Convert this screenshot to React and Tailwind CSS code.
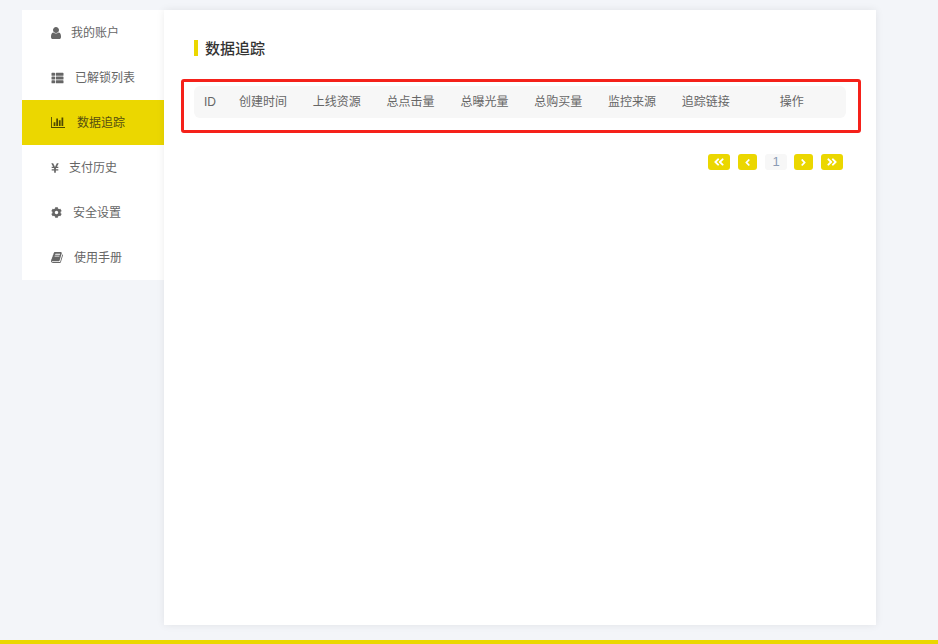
import React from 'react';
import {
  FaThList, FaYenSign, FaCog,
  FaAngleDoubleLeft, FaAngleLeft, FaAngleRight, FaAngleDoubleRight,
} from 'react-icons/fa';

// FontAwesome 4 风格图标
const UserIcon = () => (
  <svg viewBox="256 128 1280 1536" className="w-[10px] h-[12px]" fill="currentColor">
    <path d="M1536 1399q0 109-62.5 187t-150.5 78h-854q-88 0-150.5-78t-62.5-187q0-85 8.5-160.5t31.5-152 58.5-131 94-89 134.5-34.5q131 128 313 128t313-128q76 0 134.5 34.5t94 89 58.5 131 31.5 152 8.5 160.5zm-256-887q0 159-112.5 271.5t-271.5 112.5-271.5-112.5-112.5-271.5 112.5-271.5 271.5-112.5 271.5 112.5 112.5 271.5z" />
  </svg>
);

const ChartIcon = () => (
  <svg viewBox="0 192 2048 1472" className="w-[14px] h-[11px]" fill="currentColor" preserveAspectRatio="none">
    <path d="M640 896v512h-256v-512h256zm384-512v1024h-256v-1024h256zm1024 1152v128h-2048v-1472h128v1344h1920zm-640-896v768h-256v-768h256zm384-384v1152h-256v-1152h256z" />
  </svg>
);

const BookIcon = () => (
  <svg viewBox="0 128 1664 1536" className="w-[12px] h-[11px]" fill="currentColor">
    <path d="M1639 478q40 57 18 129l-275 906q-19 64-76.5 107.5t-122.5 43.5h-923q-77 0-148.5-53.5t-99.5-131.5q-24-67-2-127 0-4 3-27t4-37q1-8-3-21.5t-3-19.5q2-11 8-21t16.5-23.5 16.5-23.5q23-38 45-91.5t30-91.5q3-10 .5-30t-.5-28q3-11 17-28t17-23q21-36 42-92t25-90q1-9-2.5-32t.5-28q4-13 22-30.5t22-22.5q19-26 42.5-84.5t27.5-96.5q1-8-3-25.5t-2-26.5q2-8 9-18t18-23 17-21q8-12 16.5-30.5t15-35 16-36 19.5-32 26.5-23.5 36-11.5 47.5 5.5l-1 3q38-9 51-9h761q74 0 114 56t18 130l-274 906q-36 119-71.5 153.5t-128.5 34.5h-869q-27 0-38 15-11 16-1 43 24 70 144 70h923q29 0 56-15.5t35-41.5l300-987q7-22 5-57 38 15 59 43zm-1064 2q-4 13 2 22.5t20 9.5h608q13 0 25.5-9.5t16.5-22.5l21-64q4-13-2-22.5t-20-9.5h-608q-13 0-25.5 9.5t-16.5 22.5zm-83 256q-4 13 2 22.5t20 9.5h608q13 0 25.5-9.5t16.5-22.5l21-64q4-13-2-22.5t-20-9.5h-608q-13 0-25.5 9.5t-16.5 22.5z" />
  </svg>
);

const menu = [
  { label: '我的账户', icon: <UserIcon />, gap: 'ml-[10px]' },
  { label: '已解锁列表', icon: <FaThList className="w-[13px] h-[12px]" />, gap: 'ml-[11px]' },
  { label: '数据追踪', icon: <ChartIcon />, gap: 'ml-[12px]', active: true },
  { label: '支付历史', icon: <FaYenSign className="w-[8px] h-[12px]" />, gap: 'ml-[10px]' },
  { label: '安全设置', icon: <FaCog className="w-[11px] h-[11px]" />, gap: 'ml-[11px]' },
  { label: '使用手册', icon: <BookIcon />, gap: 'ml-[11px]' },
];

const columns = ['ID', '创建时间', '上线资源', '总点击量', '总曝光量', '总购买量', '监控来源', '追踪链接', '操作'];

const PageButton = ({ wide, children }) => (
  <span className={`${wide ? 'w-[22px]' : 'w-[19px]'} h-4 rounded-[3px] bg-[#ebd700] text-white flex items-center justify-center`}>
    {children}
  </span>
);

const App = () => {
  return (
    <div className="h-screen overflow-hidden flex flex-col bg-[#f3f5f9] font-['Liberation_Sans','Noto_Sans_CJK_SC',sans-serif] text-xs text-[#666]">
      <div className="flex-1 flex items-start pl-[22px] pt-[10px]">
        {/* 左侧菜单 */}
        <ul className="w-[142px] bg-white">
          {menu.map((item) => (
            <li
              key={item.label}
              className={`h-[45px] pl-[29px] flex items-center ${item.active ? 'bg-[#ebd700]' : ''}`}
            >
              <span className={item.active ? 'text-[#4f4a00]' : 'text-[#666]'}>{item.icon}</span>
              <span className={`${item.gap} ${item.active ? 'text-[#554f10]' : ''}`}>{item.label}</span>
            </li>
          ))}
        </ul>

        {/* 内容区 */}
        <main className="relative w-[712px] h-[615px] bg-white px-[30px] pt-[30px] shadow-[0_0_8px_rgba(0,0,0,0.08)]">
          <h2 className="h-4 border-l-4 border-[#ebd700] pl-[7px] pt-px flex items-center text-[15px] leading-4 font-medium text-[#333]">
            数据追踪
          </h2>

          <div className="relative mt-[30px] w-[652px]">
            <div className="h-8 rounded-md bg-[#f7f7f7] grid grid-cols-[35px_repeat(6,73.8px)_98px_1fr] items-center">
              {columns.map((name) => (
                <span key={name} className="pl-[10px] whitespace-nowrap">{name}</span>
              ))}
            </div>
            {/* 红色标注框 */}
            <div className="absolute -left-[13px] -right-[15px] -top-[7px] -bottom-[15px] border-[3px] border-[#f5211a] rounded-[3px]"></div>
          </div>

          <div className="mt-9 w-[649px] flex justify-end gap-2">
            <PageButton wide><FaAngleDoubleLeft className="w-[12px] h-[12px]" /></PageButton>
            <PageButton><FaAngleLeft className="w-[11px] h-[11px]" /></PageButton>
            <span className="w-[22px] h-4 -mr-px rounded-[3px] bg-[#f7f7f7] flex items-center justify-center text-[13px] text-[#8b9bb4]">1</span>
            <PageButton><FaAngleRight className="w-[11px] h-[11px]" /></PageButton>
            <PageButton wide><FaAngleDoubleRight className="w-[12px] h-[12px]" /></PageButton>
          </div>
        </main>
      </div>

      <div className="h-1 shrink-0 bg-[#ebd700]"></div>
    </div>
  );
};

export default App;
